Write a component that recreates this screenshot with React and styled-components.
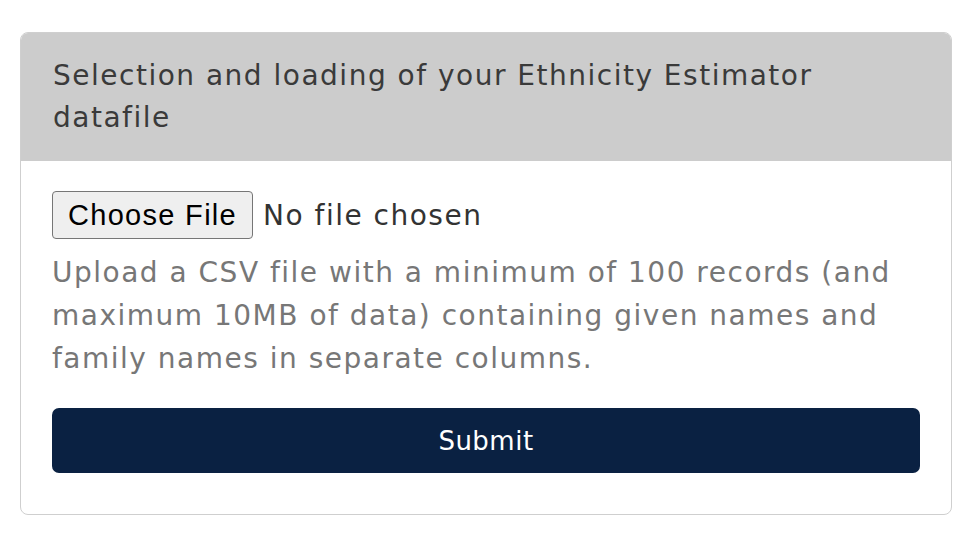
import styled, { createGlobalStyle } from "styled-components";

const GlobalStyle = createGlobalStyle`
  body {
    margin: 0;
    background: #fff;
    font-family: "DejaVu Sans", "Open Sans", sans-serif;
  }
`;

const Page = styled.div`
  padding: 32px 20px 0 20px;
`;

const Card = styled.div`
  border: 1px solid #cfcfcf;
  border-radius: 8px;
  overflow: hidden;
  background: #fff;
`;

const CardHeader = styled.div`
  background: #cccccc;
  padding: 22px 32px;
  font-size: 28px;
  letter-spacing: 1.5px;
  line-height: 42px;
  color: #3a3a3a;
`;

const CardBody = styled.div`
  padding: 30px 31px 41px 31px;
  display: flex;
  flex-direction: column;
`;

const FileInput = styled.input`
  font-family: "DejaVu Sans", sans-serif;
  font-size: 28px;
  letter-spacing: 1.5px;
  color: #333;
  height: 48px;
  align-self: flex-start;

  &::file-selector-button {
    font-family: "Liberation Sans", Arial, sans-serif;
    font-size: 29px;
    letter-spacing: 1.3px;
    height: 48px;
    padding: 0 15px;
    margin-right: 10px;
    border: 1px solid #767676;
    border-radius: 4px;
    background: #efefef;
    color: #000;
  }
`;

const Help = styled.p`
  margin: 12px 0 0 0;
  font-size: 28px;
  letter-spacing: 1.5px;
  line-height: 43px;
  color: #777777;
`;

const SubmitButton = styled.button`
  margin-top: 28px;
  height: 65px;
  border: none;
  border-radius: 7px;
  background: #0a2142;
  color: #fff;
  font-family: "DejaVu Sans", sans-serif;
  font-size: 26px;
  letter-spacing: 0.5px;
  cursor: pointer;
`;

export default function App() {
  return (
    <>
      <GlobalStyle />
      <Page>
        <Card>
          <CardHeader>
            Selection and loading of your Ethnicity Estimator datafile
          </CardHeader>
          <CardBody>
            <FileInput type="file" accept=".csv" />
            <Help>
              Upload a CSV file with a minimum of 100 records (and maximum 10MB
              of data) containing given names and family names in separate
              columns.
            </Help>
            <SubmitButton type="submit">Submit</SubmitButton>
          </CardBody>
        </Card>
      </Page>
    </>
  );
}
